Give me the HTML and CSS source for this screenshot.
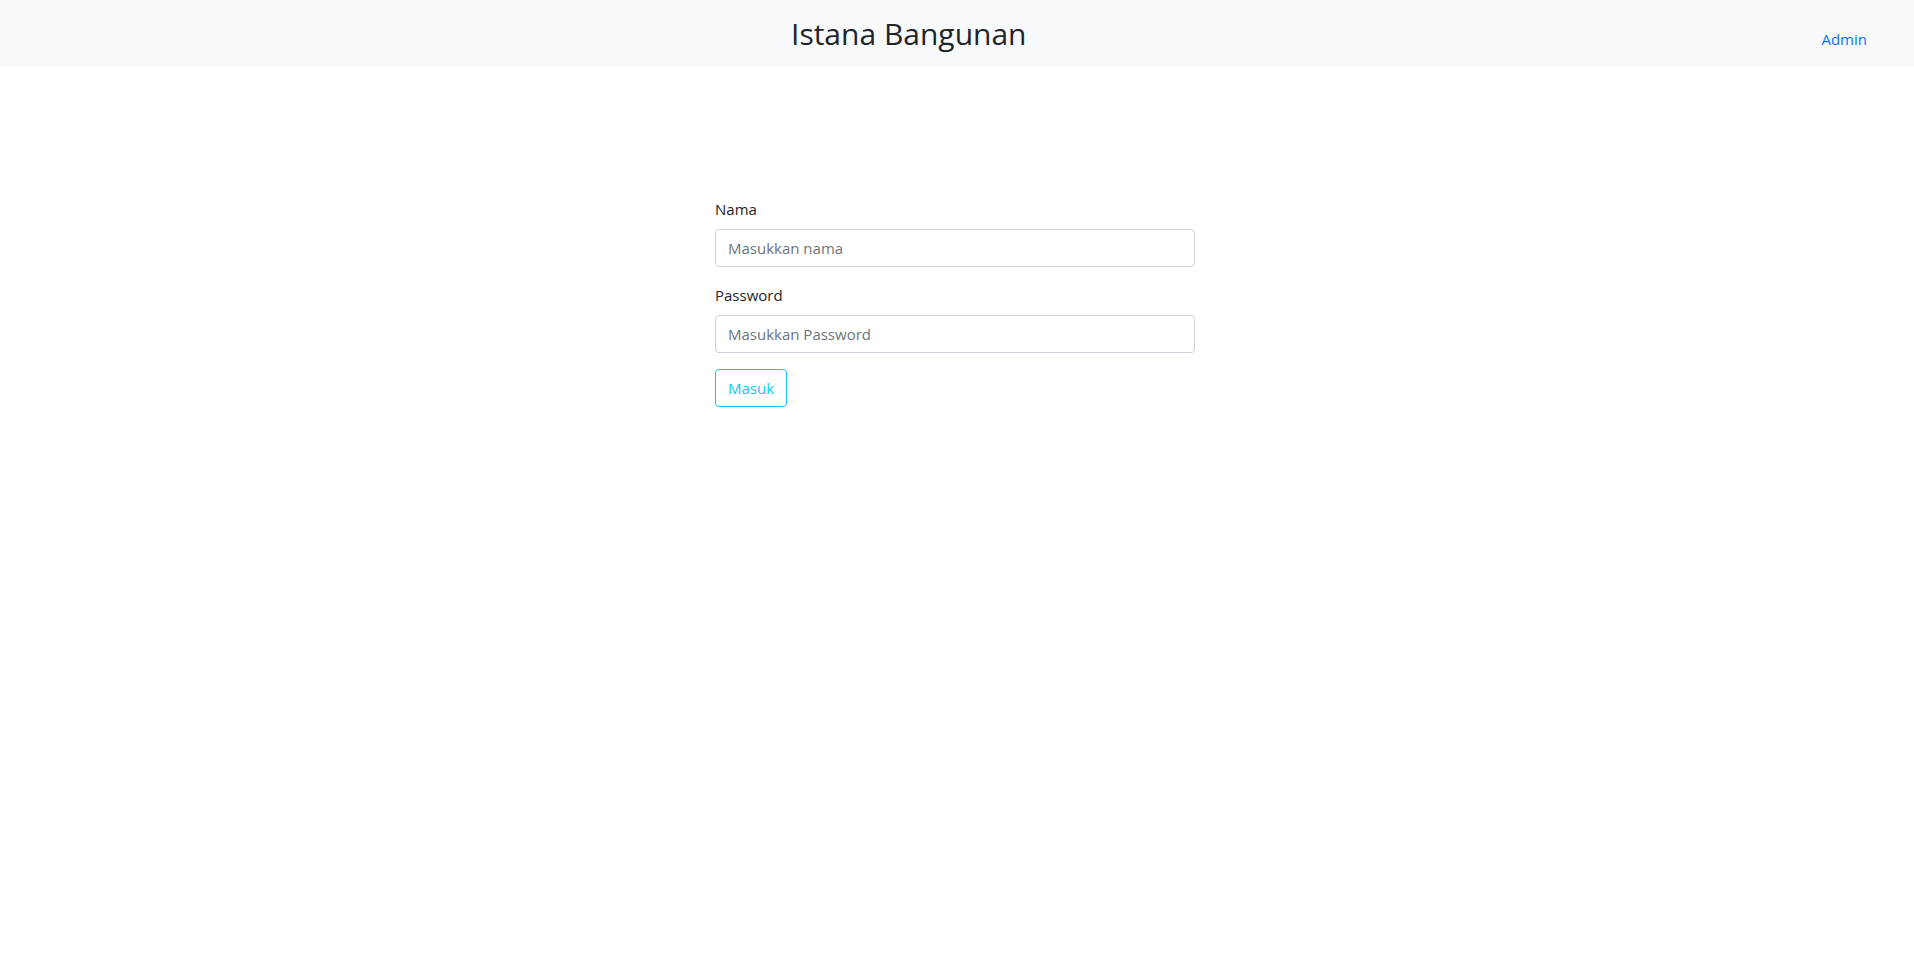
FILE: index.html
```html
<!DOCTYPE html>
<html lang="id">
<head>
<meta charset="utf-8">
<title>Istana Bangunan</title>
<link rel="stylesheet" href="styles.css">
</head>
<body>
<nav class="navbar">
  <span class="brand">Istana Bangunan</span>
  <a class="nav-link" href="#">Admin</a>
</nav>
<main class="page">
  <form class="login-form">
    <div class="form-group">
      <label class="form-label" for="nama">Nama</label>
      <input class="form-control" id="nama" type="text" placeholder="Masukkan nama">
    </div>
    <div class="form-group">
      <label class="form-label" for="pw">Password</label>
      <input class="form-control" id="pw" type="password" placeholder="Masukkan Password">
    </div>
    <button class="btn-outline-info" type="button">Masuk</button>
  </form>
</main>
</body>
</html>
```
FILE: styles.css
```css
* { box-sizing: border-box; }
html, body { margin: 0; padding: 0; }
body {
  font-family: "Open Sans", "Noto Sans", sans-serif;
  font-size: 16px;
  line-height: 1.5;
  color: #212529;
  background: #fff;
}
.navbar {
  height: 67px;
  background: #f8f9fa;
  display: flex;
  align-items: center;
  padding: 0 47px 0 791px;
}
.brand {
  font-size: 30px;
  line-height: 1.2;
  color: #212529;
  padding-top: 1px;
}
.nav-link {
  margin-left: auto;
  font-size: 15px;
  color: #0d6efd;
  text-decoration: none;
  padding-top: 11px;
}
.page {
  display: flex;
  justify-content: center;
  padding: 130px 4px 0 0;
}
.login-form {
  width: 480px;
}
.form-group { margin-bottom: 16px; }
.form-label {
  display: block;
  margin-bottom: 8px;
  font-size: 15px;
  line-height: 24px;
}
.form-control {
  display: block;
  width: 100%;
  height: 38px;
  padding: 6px 12px;
  font-family: inherit;
  font-size: 15px;
  color: #212529;
  border: 1px solid #ced4da;
  border-radius: 4px;
  background: #fff;
}
.form-control::placeholder { color: #6c757d; }
.btn-outline-info {
  height: 38px;
  width: 72px;
  padding: 6px 0;
  font-family: inherit;
  font-size: 15px;
  color: #0dcaf0;
  background: transparent;
  border: 1px solid #0dcaf0;
  border-radius: 4px;
}
```
